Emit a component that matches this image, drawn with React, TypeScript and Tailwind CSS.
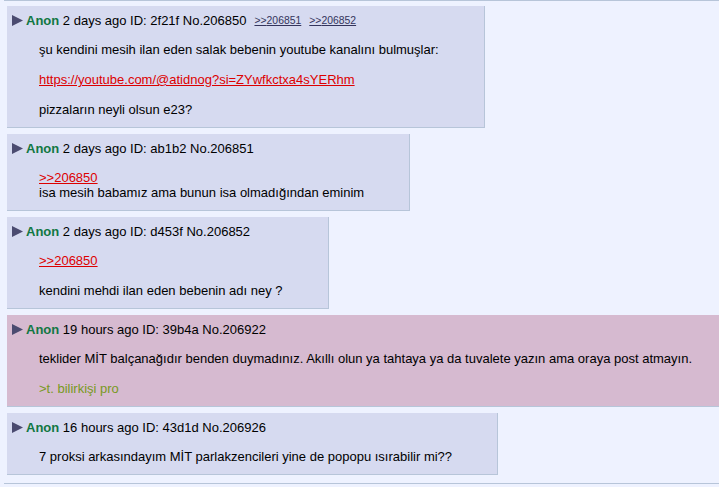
import type { ReactNode } from 'react';

type Line =
  | { kind: 'text'; text: string }
  | { kind: 'quote'; text: string }
  | { kind: 'link'; text: string }
  | { kind: 'green'; text: string }
  | { kind: 'blank' };

type Post = {
  when: string;
  id: string;
  no: string;
  backlinks?: string[];
  highlight?: boolean;
  lines: Line[];
};

const POSTS: Post[] = [
  {
    when: '2 days ago',
    id: '2f21f',
    no: '206850',
    backlinks: ['206851', '206852'],
    lines: [
      { kind: 'text', text: 'şu kendini mesih ilan eden salak bebenin youtube kanalını bulmuşlar:' },
      { kind: 'blank' },
      { kind: 'link', text: 'https://youtube.com/@atidnog?si=ZYwfkctxa4sYERhm' },
      { kind: 'blank' },
      { kind: 'text', text: 'pizzaların neyli olsun e23?' },
    ],
  },
  {
    when: '2 days ago',
    id: 'ab1b2',
    no: '206851',
    lines: [
      { kind: 'quote', text: '>>206850' },
      { kind: 'text', text: 'isa mesih babamız ama bunun isa olmadığından eminim' },
    ],
  },
  {
    when: '2 days ago',
    id: 'd453f',
    no: '206852',
    lines: [
      { kind: 'quote', text: '>>206850' },
      { kind: 'blank' },
      { kind: 'text', text: 'kendini mehdi ilan eden bebenin adı ney ?' },
    ],
  },
  {
    when: '19 hours ago',
    id: '39b4a',
    no: '206922',
    highlight: true,
    lines: [
      {
        kind: 'text',
        text: 'teklider MİT balçanağıdır benden duymadınız. Akıllı olun ya tahtaya ya da tuvalete yazın ama oraya post atmayın.',
      },
      { kind: 'blank' },
      { kind: 'green', text: '>t. bilirkişi pro' },
    ],
  },
  {
    when: '16 hours ago',
    id: '43d1d',
    no: '206926',
    lines: [{ kind: 'text', text: '7 proksi arkasındayım MİT parlakzencileri yine de popopu ısırabilir mi??' }],
  },
];

function renderLine(line: Line, i: number): ReactNode {
  switch (line.kind) {
    case 'blank':
      return <div key={i} className="h-[15px]" />;
    case 'quote':
    case 'link':
      return (
        <div key={i}>
          <a className="text-[#dd0000] underline">{line.text}</a>
        </div>
      );
    case 'green':
      return (
        <div key={i} className="text-[#789922]">
          {line.text}
        </div>
      );
    default:
      return <div key={i}>{line.text}</div>;
  }
}

function PostBox({ post }: { post: Post }) {
  return (
    <div
      className={`ml-[7px] w-max border-r border-b border-[#b7c5d9] pt-[7px] pb-[10px] ${
        post.highlight ? 'bg-[#d6bad0]' : 'bg-[#d6daf0]'
      }`}
    >
      {/* post header */}
      <div className="flex items-center pl-[5px] h-[15px] whitespace-pre">
        <svg width="11" height="11" viewBox="0 0 11 11" className="shrink-0">
          <polygon points="0,0 11,5.5 0,11" fill="#4b4b70" />
        </svg>
        <span className="ml-[3px] font-bold text-[#117743]">Anon</span>
        <span> {post.when} ID: {post.id} No.{post.no}</span>
        {post.backlinks?.map((b) => (
          <a key={b} className="ml-[8px] text-[10.4px] text-[#34345c] underline">
            &gt;&gt;{b}
          </a>
        ))}
      </div>

      {/* message */}
      <div className="mt-[14px] ml-[32px] mr-[45px] whitespace-nowrap">
        {post.lines.map(renderLine)}
      </div>
    </div>
  );
}

export default function App() {
  return (
    <div className="w-[719px] h-[487px] overflow-hidden bg-[#eef2ff] text-[13px] leading-[15px] text-black font-['Liberation_Sans',Arial,sans-serif]">
      <div className="ml-[4px] h-px bg-[#b7c5d9]" />
      <div className="flex flex-col gap-[6px] pt-[5px]">
        {POSTS.map((p) => (
          <PostBox key={p.no} post={p} />
        ))}
      </div>
      <div className="mt-[8px] ml-[4px] h-px bg-[#b7c5d9]" />
    </div>
  );
}
